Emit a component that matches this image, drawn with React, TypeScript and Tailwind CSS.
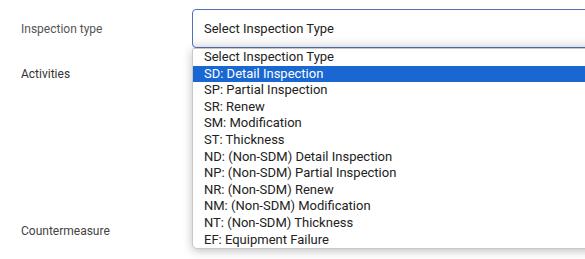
const options = [
  "Select Inspection Type",
  "SD: Detail Inspection",
  "SP: Partial Inspection",
  "SR: Renew",
  "SM: Modification",
  "ST: Thickness",
  "ND: (Non-SDM) Detail Inspection",
  "NP: (Non-SDM) Partial Inspection",
  "NR: (Non-SDM) Renew",
  "NM: (Non-SDM) Modification",
  "NT: (Non-SDM) Thickness",
  "EF: Equipment Failure",
];

export default function App() {
  const selected = 1;

  return (
    <div
      className="relative w-[585px] h-[259px] overflow-hidden bg-white text-[#333]"
      style={{ fontFamily: "Roboto, 'Liberation Sans', sans-serif" }}
    >
      <div className="pt-[9px]">
        {/* Inspection type */}
        <div className="flex items-center h-[39px]">
          <div className="w-[192px] pl-[21px] text-[12px] text-[#555]">Inspection type</div>
          <div className="flex-1 h-full -mr-[20px] flex items-center pl-[11px] border border-[#4f72b8] rounded-[4px] bg-gradient-to-b from-white from-70% to-[#f1f1f1] text-[13px] text-[#222]">
            Select Inspection Type
          </div>
        </div>

        {/* Activities */}
        <div className="flex h-[168px] pt-[17px]">
          <div className="w-[192px] pl-[21px] text-[12px] text-[#333]">Activities</div>
          <div className="flex-1" />
        </div>

        {/* Countermeasure */}
        <div className="flex items-center h-[30px]">
          <div className="w-[192px] pl-[21px] text-[12px] text-[#444]">Countermeasure</div>
          <div className="flex-1" />
        </div>
      </div>

      {/* open select list */}
      <div className="absolute left-[192px] top-[48px] w-[420px] bg-white border border-[#c8c8c8] rounded-b-[5px] rounded-tl-[2px] shadow-[0_2px_10px_rgba(0,0,0,0.25)] text-[13px] leading-[16.6px] text-[#222]">
        {options.map((o, i) => (
          <div
            key={o}
            className={i === selected ? "pl-[11px] bg-[#1967d2] text-white" : "pl-[11px]"}
          >
            {o}
          </div>
        ))}
      </div>
    </div>
  );
}
